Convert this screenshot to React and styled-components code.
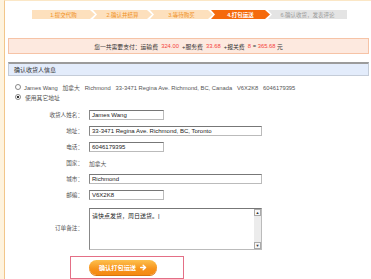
import React from 'react';
import styled, { createGlobalStyle } from 'styled-components';

const GlobalStyle = createGlobalStyle`
  html, body {
    margin: 0;
    padding: 0;
    background: #fff;
    font-family: "Liberation Sans", "Noto Sans CJK SC", sans-serif;
  }
`;

const Frame = styled.div`
  width: 371px;
  height: 279px;
  box-sizing: border-box;
  border-left: 4px solid #fef3de;
  overflow: hidden;
`;

const Inner = styled.div`
  height: 100%;
  box-sizing: border-box;
  border-left: 1px solid #f2c68a;
  border-top: 1px solid #fbe7c6;
  padding-top: 9px;
`;

const Steps = styled.div`
  display: flex;
  margin-left: 27px;
  height: 9px;
`;

const Step = styled.div`
  width: ${(p) => p.$w}px;
  margin-left: ${(p) => (p.$first ? 0 : -2)}px;
  display: flex;
  align-items: center;
  justify-content: center;
  font-size: 5.5px;
  white-space: nowrap;
  background: ${(p) => (p.$state === 'active' ? '#f56a0c' : p.$state === 'todo' ? '#e4e4e4' : '#fde0bd')};
  color: ${(p) => (p.$state === 'active' ? '#fff' : p.$state === 'todo' ? '#9a9a9a' : '#f0901e')};
  font-weight: ${(p) => (p.$state === 'active' ? 'bold' : 'normal')};
  clip-path: ${(p) =>
    p.$state === 'todo'
      ? 'polygon(0 0, 100% 0, 100% 100%, 0 100%, 4px 50%)'
      : p.$first
      ? 'polygon(0 0, calc(100% - 5px) 0, 100% 50%, calc(100% - 5px) 100%, 0 100%)'
      : 'polygon(0 0, calc(100% - 5px) 0, 100% 50%, calc(100% - 5px) 100%, 0 100%, 4px 50%)'};
`;

const TotalBar = styled.div`
  margin: 19px 2px 0 3px;
  height: 14px;
  border: 1px solid #f6c3a6;
  background: #fde9df;
  display: flex;
  align-items: center;
  justify-content: center;
  font-size: 5.8px;
  color: #333;
  white-space: pre;
`;

const Money = styled.span`
  color: #f4433c;
`;

const SectionHead = styled.div`
  margin: 8px 2px 0 3px;
  height: 11px;
  border: 1px solid #c4ccd8;
  border-top: 2px solid #9b9b9b;
  background: #e3ecfb;
  display: flex;
  align-items: center;
  padding-left: 5px;
  font-size: 6px;
  color: #333;
`;

const Choices = styled.div`
  margin: 7px 0 0 10px;
  display: flex;
  flex-direction: column;
  gap: 2px;
`;

const Choice = styled.div`
  display: flex;
  align-items: center;
  height: 8px;
  font-size: 5.8px;
  color: #555;
  white-space: pre;
`;

const Radio = styled.span`
  width: 4px;
  height: 4px;
  border-radius: 50%;
  border: 1px solid #888;
  background: ${(p) => (p.$on ? 'radial-gradient(circle, #333 0 1.2px, #fff 1.4px)' : '#fff')};
  margin-right: ${(p) => p.$gap}px;
  flex: none;
`;

const Form = styled.div`
  display: grid;
  grid-template-columns: 78px 1fr;
  column-gap: 6px;
  row-gap: 6px;
  margin-top: 9px;
  align-items: center;
`;

const Label = styled.div`
  text-align: right;
  font-size: 5.6px;
  color: #555;
  white-space: nowrap;
`;

const Field = styled.div`
  width: ${(p) => p.$w}px;
  height: 10px;
  box-sizing: border-box;
  border: 1px solid #bbb;
  border-top-color: #777;
  border-left-color: #888;
  background: #fff;
  display: flex;
  align-items: center;
  padding-left: 2px;
  font-size: 6px;
  color: #222;
  white-space: nowrap;
  overflow: hidden;
`;

const Plain = styled.div`
  font-size: 5.8px;
  color: #555;
  height: 10px;
  display: flex;
  align-items: center;
`;

const NoteBox = styled.div`
  width: 173px;
  height: 42px;
  margin-top: 2px;
  box-sizing: border-box;
  border: 1px solid #bbb;
  border-top-color: #777;
  border-left-color: #888;
  display: flex;
  background: #fff;
`;

const NoteText = styled.div`
  flex: 1;
  padding: 2px;
  font-size: 6px;
  color: #222;
`;

const Scroll = styled.div`
  width: 7px;
  background: #ececec;
  display: flex;
  flex-direction: column;
  justify-content: space-between;
`;

const ScrollBtn = styled.div`
  height: 7px;
  box-sizing: border-box;
  border: 1px solid #aaa;
  background: #f6f6f6;
  font-size: 4px;
  line-height: 5px;
  text-align: center;
  color: #333;
`;

const SubmitWrap = styled.div`
  margin: 6px 0 0 65px;
  width: 114px;
  height: 23px;
  box-sizing: border-box;
  border: 1px solid #e46f86;
  display: flex;
  align-items: center;
  padding-left: 18px;
`;

const SubmitBtn = styled.div`
  width: 68px;
  height: 15px;
  border-radius: 8px;
  background: linear-gradient(#fdc04e, #f7931b 60%, #f48a12);
  box-shadow: 0 1px 0 #d9760c;
  color: #fff;
  font-weight: bold;
  font-size: 6.2px;
  display: flex;
  align-items: center;
  justify-content: center;
  gap: 4px;
`;

const steps = [
  { t: '1.提交代购', w: 63, s: 'done' },
  { t: '2.确认并结算', w: 59, s: 'done' },
  { t: '3.等待购买', w: 63, s: 'done' },
  { t: '4.打包运送', w: 59, s: 'active' },
  { t: '6.确认收货，发表评论', w: 79, s: 'todo' },
];

export default function App() {
  return (
    <Frame>
      <GlobalStyle />
      <Inner>
        <Steps>
          {steps.map((s, i) => (
            <Step key={s.t} $w={s.w} $first={i === 0} $state={s.s}>
              {s.t}
            </Step>
          ))}
        </Steps>

        <TotalBar>
          您一共需要支付：运输费  <Money>324.00</Money>  +服务费  <Money>33.68</Money>  +报关费  <Money>8</Money> = <Money>365.68</Money> 元
        </TotalBar>

        <SectionHead>确认收货人信息</SectionHead>

        <Choices>
          <Choice>
            <Radio $gap={3} />
            James Wang   加拿大   Richmond   33-3471 Regina Ave. Richmond, BC, Canada   V6X2K8   6046179395
          </Choice>
          <Choice>
            <Radio $on $gap={4} />
            使用其它地址
          </Choice>
        </Choices>

        <Form>
          <Label>收货人姓名：</Label>
          <Field $w={75}>James Wang</Field>
          <Label>地址：</Label>
          <Field $w={173}>33-3471 Regina Ave. Richmond, BC, Toronto</Field>
          <Label>电话：</Label>
          <Field $w={75}>6046179395</Field>
          <Label>国家：</Label>
          <Plain>加拿大</Plain>
          <Label>城市：</Label>
          <Field $w={173}>Richmond</Field>
          <Label>邮编：</Label>
          <Field $w={75}>V6X2K8</Field>
          <Label>订单备注：</Label>
          <NoteBox>
            <NoteText>请快点发货，周日送货。|</NoteText>
            <Scroll>
              <ScrollBtn>▲</ScrollBtn>
              <ScrollBtn>▼</ScrollBtn>
            </Scroll>
          </NoteBox>
        </Form>

        <SubmitWrap>
          <SubmitBtn>
            确认打包运送
            <svg width="7" height="7" viewBox="0 0 10 10">
              <path d="M1 5h6M4.5 1.8 8 5 4.5 8.2" stroke="#fff" strokeWidth="2" fill="none" strokeLinecap="round" strokeLinejoin="round" />
            </svg>
          </SubmitBtn>
        </SubmitWrap>
      </Inner>
    </Frame>
  );
}
